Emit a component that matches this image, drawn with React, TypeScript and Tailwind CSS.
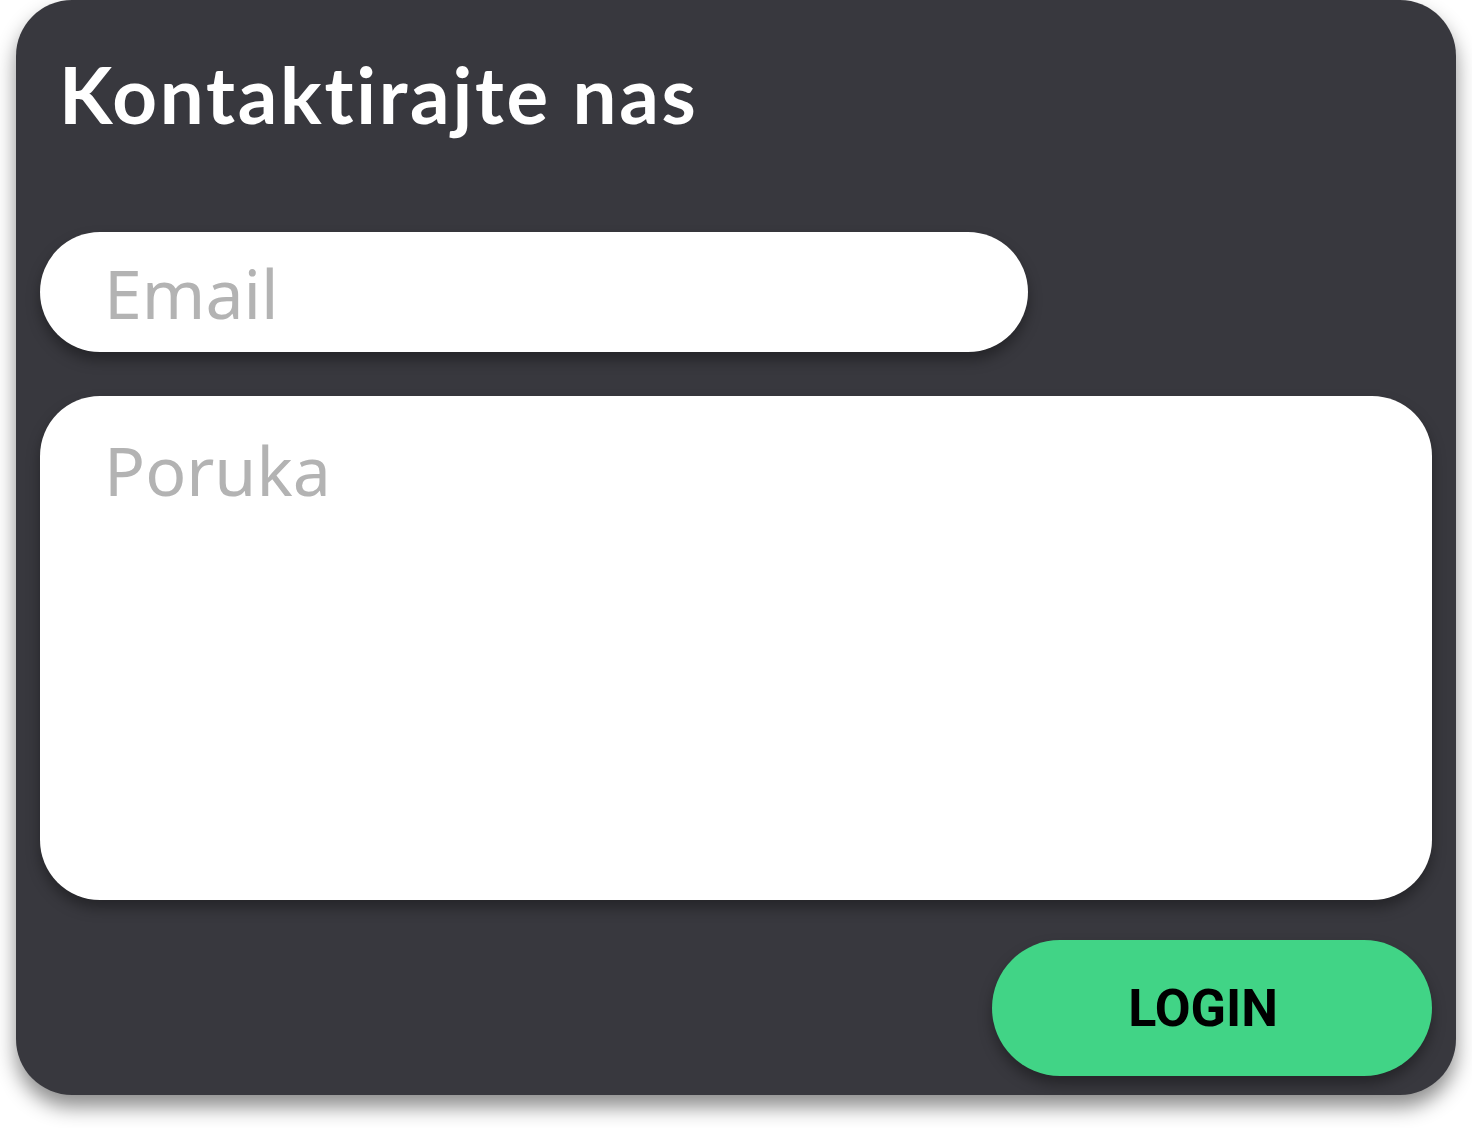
export default function App() {
  return (
    <div className="min-h-screen bg-white">
      <div className="ml-4 w-[1440px] h-[1095px] bg-[#38383e] rounded-[56px] shadow-[0_12px_20px_rgba(0,0,0,0.45)] px-6 flex flex-col">
        {/* Title */}
        <div className="h-[232px] pt-[55px] pl-[19px]">
          <h1 className="text-white text-[78px] leading-none font-bold tracking-[0.035em] [font-variant-ligatures:none] font-['Lato',sans-serif]">
            Kontaktirajte nas
          </h1>
        </div>

        {/* Email */}
        <input
          type="email"
          placeholder="Email"
          className="w-[988px] h-[120px] rounded-full bg-white pl-[64px] pr-8 text-[68px] font-['Noto_Sans',sans-serif] text-gray-700 placeholder:text-[#b3b3b3] outline-none shadow-[0_8px_14px_rgba(0,0,0,0.35)]"
        />

        {/* Message */}
        <textarea
          placeholder="Poruka"
          className="mt-[44px] w-full h-[504px] rounded-[60px] bg-white pl-[64px] pr-8 pt-[30px] text-[68px] leading-[1.3] font-['Noto_Sans',sans-serif] text-gray-700 placeholder:text-[#b3b3b3] outline-none resize-none shadow-[0_8px_14px_rgba(0,0,0,0.35)]"
        />

        {/* Button */}
        <div className="mt-[40px] flex justify-end">
          <button className="w-[440px] h-[136px] rounded-full bg-[#41d486] pr-[18px] pt-[2px] text-black text-[52px] font-bold font-['Roboto',sans-serif] shadow-[0_8px_14px_rgba(0,0,0,0.35)]">
            LOGIN
          </button>
        </div>
      </div>
    </div>
  );
}
